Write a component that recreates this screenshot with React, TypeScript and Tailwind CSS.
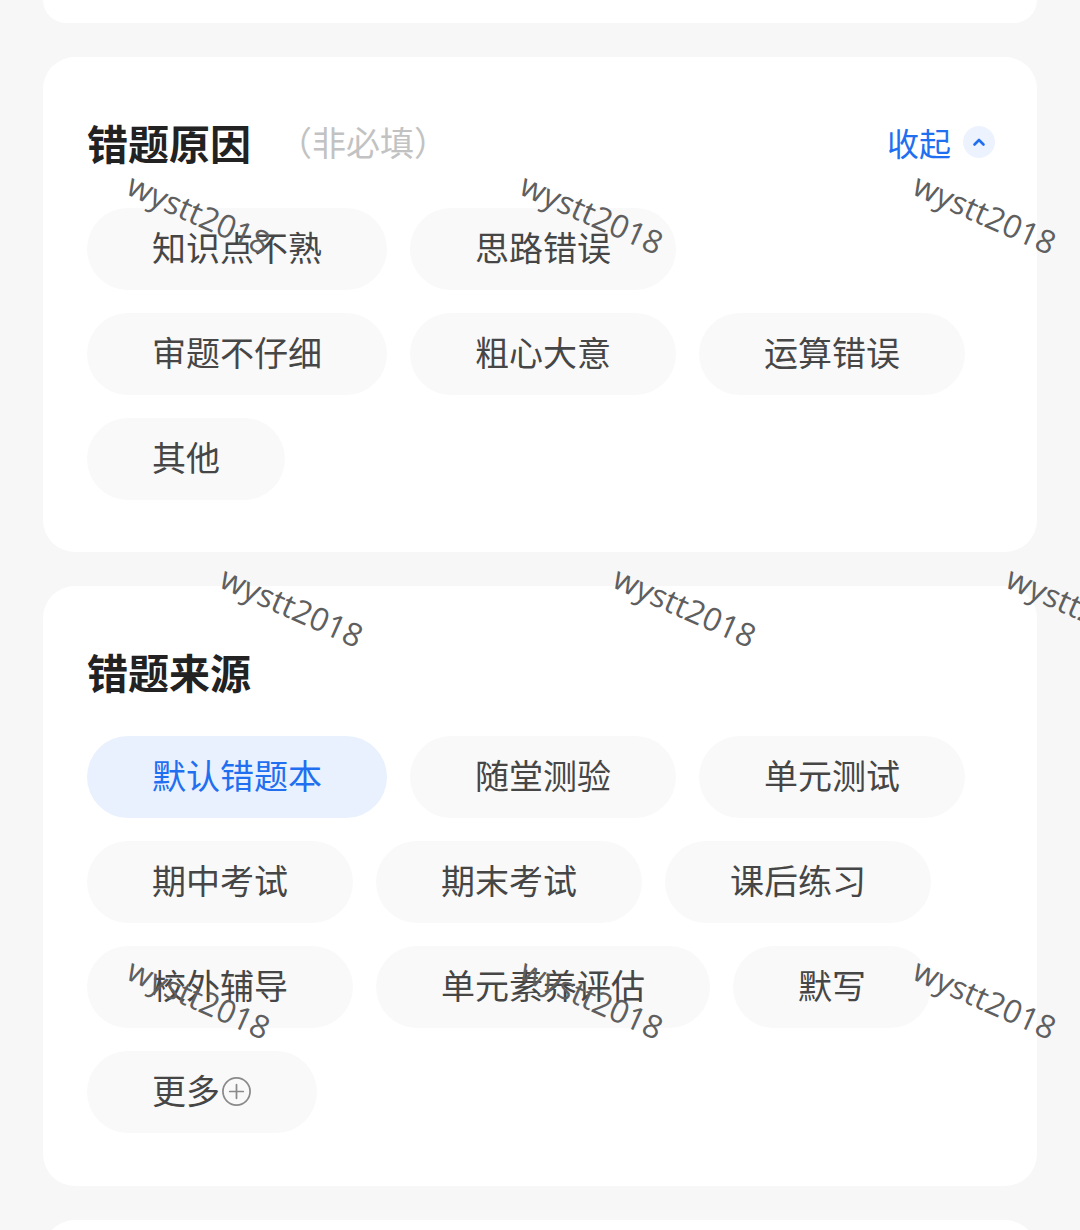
import React from "react";

const CJK = { fontFamily: '"Noto Sans CJK SC", "Noto Sans", sans-serif' };

function Chip({ label, active, plus }: { label: string; active?: boolean; plus?: boolean }) {
  return (
    <div
      className={`h-[82px] rounded-full flex items-center px-[65px] pb-[5px] text-[34px] leading-none ${
        active ? "bg-[#e9f1fe] text-[#1f6ff0]" : "bg-[#f9f9f9] text-[#464646]"
      }`}
    >
      <span>{label}</span>
      {plus && (
        <svg width="31" height="31" viewBox="0 0 32 32" className="ml-[1px] mt-[4px]" fill="none">
          <circle cx="16" cy="16" r="14" stroke="#8a8a8a" strokeWidth="1.8" />
          <path d="M16 9v14M9 16h14" stroke="#8a8a8a" strokeWidth="1.8" strokeLinecap="round" />
        </svg>
      )}
    </div>
  );
}

function Watermark({ left, top }: { left: number; top: number }) {
  return (
    <span
      className="absolute text-[32px] leading-none text-[#5f5f5f] whitespace-nowrap origin-top-left rotate-[24deg]"
      style={{ left, top, fontFamily: '"Open Sans", "Noto Sans", sans-serif' }}
    >
      wystt2018
    </span>
  );
}

export default function App() {
  const reasons = ["知识点不熟", "思路错误", "审题不仔细", "粗心大意", "运算错误", "其他"];
  const sources = ["默认错题本", "随堂测验", "单元测试", "期中考试", "期末考试", "课后练习", "校外辅导", "单元素养评估", "默写"];
  const marks: [number, number][] = [
    [136, 168],
    [529, 168],
    [922, 168],
    [229, 561],
    [622, 561],
    [1015, 561],
    [136, 953],
    [529, 953],
    [922, 953],
  ];
  return (
    <div className="relative w-[1080px] h-[1230px] overflow-hidden bg-[#f7f7f7]" style={CJK}>
      <div className="flex flex-col gap-[34px] px-[43px]">
        <div className="h-[23px] bg-white rounded-b-[32px]" />

        <div className="bg-white rounded-[32px] pt-[63px] pb-[52px] pl-[44px] pr-[42px]">
          <div className="h-[44px] flex items-center">
            <span className="text-[41px] font-bold text-[#222] leading-none">错题原因</span>
            <span className="ml-[27px] text-[34px] text-[#c2c2c2] leading-none">（非必填）</span>
            <div className="ml-auto flex items-center">
              <span className="text-[32px] text-[#1f6ff0] leading-none">收起</span>
              <span className="ml-[12px] w-[32px] h-[32px] rounded-full bg-[#edf3fe] flex items-center justify-center">
                <svg width="14" height="10" viewBox="0 0 14 10" fill="none">
                  <path d="M2.5 7.5L7 3L11.5 7.5" stroke="#1f6ff0" strokeWidth="2.6" strokeLinecap="round" strokeLinejoin="round" />
                </svg>
              </span>
            </div>
          </div>
          <div className="mt-[44px] flex flex-wrap gap-[23px]">
            {reasons.map((r) => (
              <Chip key={r} label={r} />
            ))}
          </div>
        </div>

        <div className="bg-white rounded-[32px] pt-[63px] pb-[53px] pl-[44px] pr-[42px]">
          <div className="h-[44px] flex items-center">
            <span className="text-[41px] font-bold text-[#222] leading-none">错题来源</span>
          </div>
          <div className="mt-[43px] flex flex-wrap gap-[23px]">
            {sources.map((s, i) => (
              <Chip key={s} label={s} active={i === 0} />
            ))}
            <Chip label="更多" plus />
          </div>
        </div>

        <div className="h-[120px] bg-white rounded-t-[32px]" />
      </div>

      <div className="absolute inset-0 pointer-events-none">
        {marks.map(([l, t], i) => (
          <Watermark key={i} left={l} top={t} />
        ))}
      </div>
    </div>
  );
}
